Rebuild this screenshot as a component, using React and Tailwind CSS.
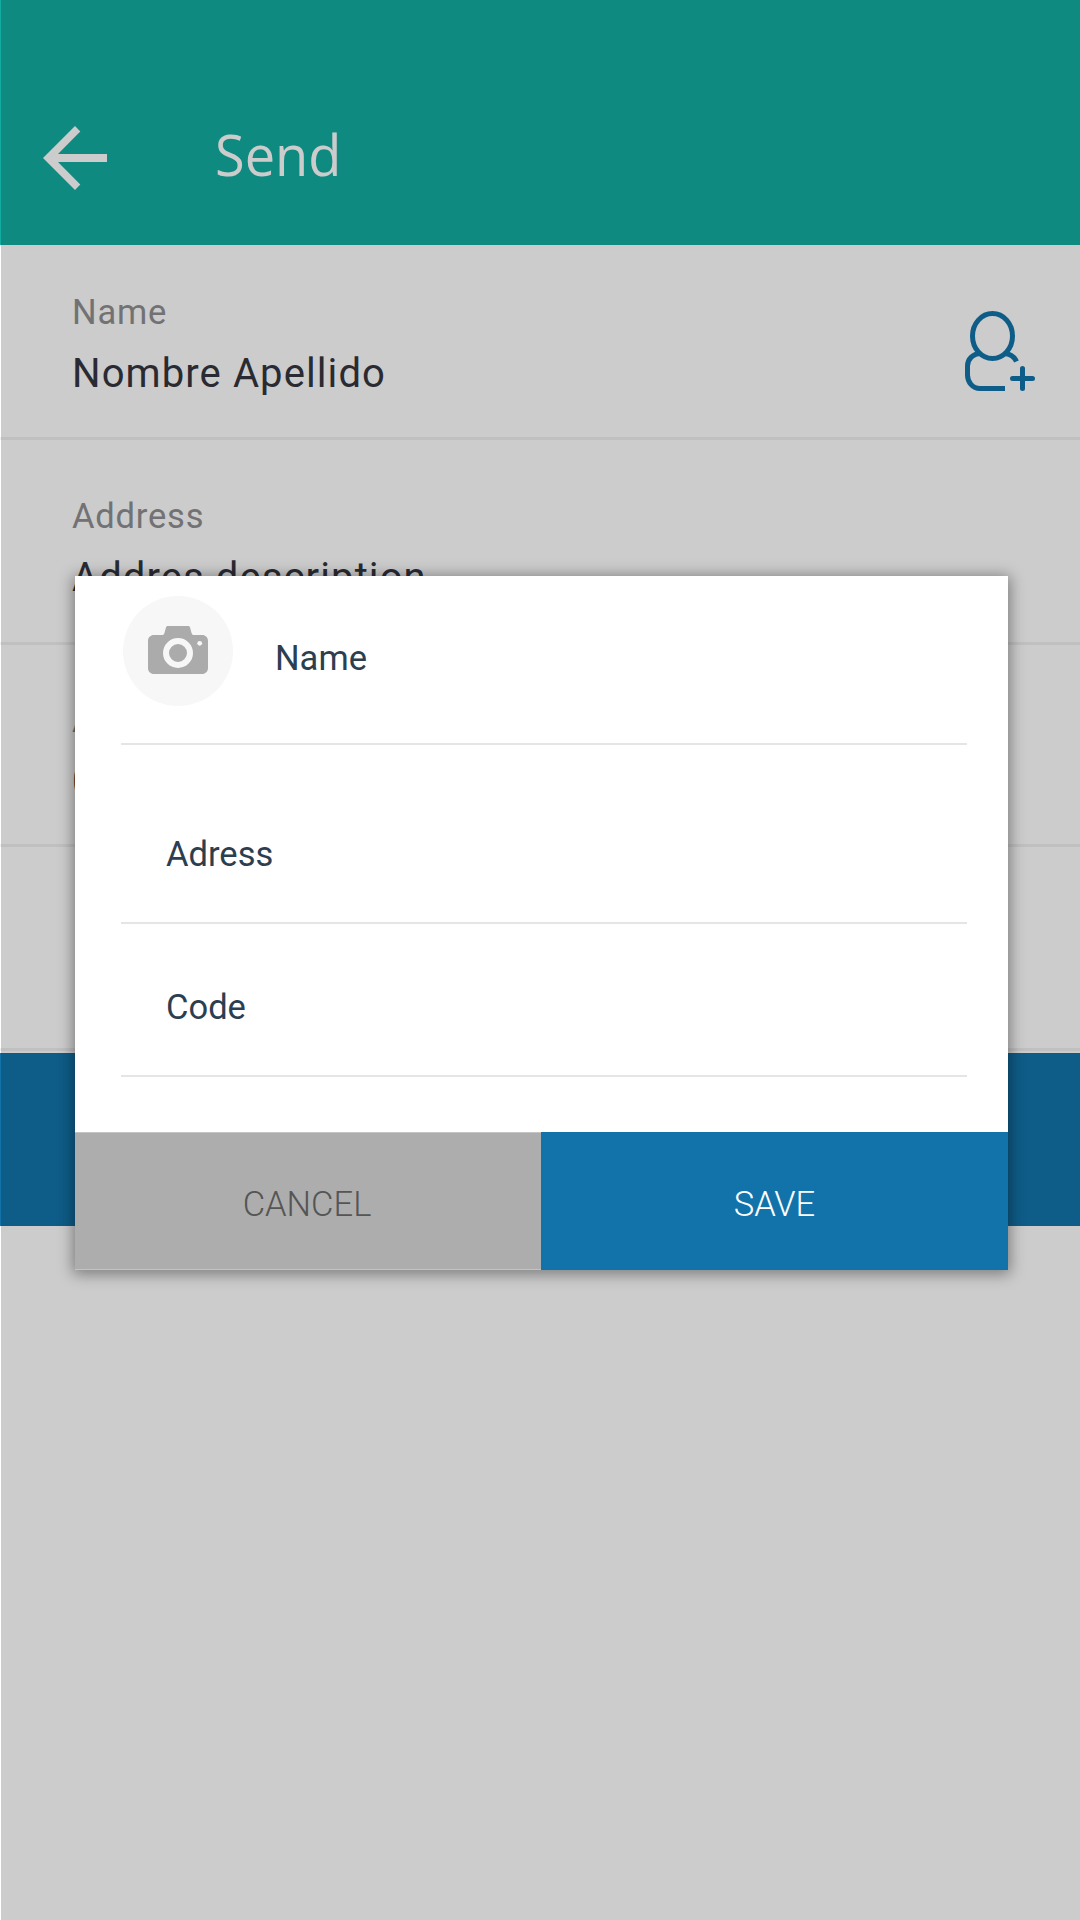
function BackArrow() {
  return (
    <svg className="ml-[43px] h-16 w-16" viewBox="0 0 64 64" fill="#fff">
      <path d="M64 28H15L37.300 5.500 32 0 0 32l32 32 5.300-5.500L15 36H64z" />
    </svg>
  );
}

function AddContact() {
  return (
    <svg className="h-20 w-[70px]" viewBox="0 0 70 80" fill="none" stroke="#1274ab" strokeWidth="5">
      <ellipse cx="27.500" cy="25" rx="20" ry="22.500" />
      <path d="M16 42.500C8 42.500 2.500 48 2.500 55v9c0 7 5 13.500 12.500 13.500h25" />
      <path d="M40 42.500c5 .5 9.500 3.500 11.500 8" />
      <path d="M57.500 57.500v20M47.500 67.500h20" strokeLinecap="round" />
    </svg>
  );
}

function Camera() {
  return (
    <svg className="mb-[2px] h-12 w-[60px]" viewBox="0 0 60 48">
      <path
        fill="#ababab"
        d="M6 9h8.500c1.500 0 2-2 2.500-4l.8-3c.4-1.400 1-2 2.200-2h20c1.200 0 1.800.6 2.200 2l.8 3c.5 2 1 4 2.500 4H54c3.500 0 6 2.500 6 6v27c0 3.500-2.500 6-6 6H6c-3.500 0-6-2.500-6-6V15c0-3.500 2.500-6 6-6z"
      />
      <circle cx="30" cy="27" r="12" fill="#ababab" stroke="#f7f7f7" strokeWidth="6" />
      <circle cx="51.700" cy="17.300" r="2.400" fill="#f7f7f7" />
    </svg>
  );
}

function Row({ label, value, height, children }) {
  return (
    <div className={`flex justify-between border-b-3 border-[#f1f1f1] pl-[72px] ${height}`}>
      <div>
        <div className="text-[34.500px] leading-[41px] tracking-[0.800px] text-[#8f8f92]">{label}</div>
        <div className="mt-[17px] text-[40px] leading-[47px] tracking-[1.100px] text-[#353540]">{value}</div>
      </div>
      {children}
    </div>
  );
}

function Field({ label, height, pad }) {
  return (
    <div className={`mr-[41px] ml-[46px] border-b-2 border-[#e4e5e6] pl-[45px] ${height} ${pad}`}>
      {label}
    </div>
  );
}

export default function App() {
  return (
    <div className="relative h-[1920px] w-[1080px] overflow-hidden bg-white font-['Roboto',sans-serif] antialiased">
      <header className="flex h-[245px] items-start bg-[#12ada0] pt-[126px]">
        <BackArrow />
        <h1 className="mt-[-10px] ml-[108px] origin-left scale-x-[0.950] font-['Open_Sans',sans-serif] text-[57px] leading-[76px] text-white">
          Send
        </h1>
      </header>
      <Row label="Name" value="Nombre Apellido" height="h-[195px] pt-[47px]">
        <div className="mt-[19px] mr-[45px]">
          <AddContact />
        </div>
      </Row>
      <Row label="Address" value="Addres description" height="h-[205px] pt-[56px]" />
      <Row label="Amount" value="0" height="h-[202px] pt-[55px]" />
      <div className="h-[204px] border-b-3 border-[#f1f1f1]" />
      <div className="mt-[2px] h-[173px] bg-[#1273ab]" />

      <div className="absolute inset-y-0 right-0 left-px bg-black/20" />

      <section className="absolute top-[576px] left-[75px] flex h-[694px] w-[933px] flex-col bg-white text-[34.500px] leading-[41px] tracking-normal text-[#2c3e50] shadow-[0_2px_14px_2px_rgba(0,0,0,0.4)]">
        <div className="mr-[41px] ml-[46px] flex h-[169px] border-b-2 border-[#e4e5e6]">
          <div className="mt-[20px] ml-[2px] flex h-[110px] w-[110px] items-center justify-center rounded-full bg-[#f7f7f8]">
            <Camera />
          </div>
          <div className="mt-[62px] ml-[42px]">Name</div>
        </div>
        <Field label="Adress" height="h-[179px]" pad="pt-[89px]" />
        <Field label="Code" height="h-[153px]" pad="pt-[63px]" />
        <div className="mt-auto grid h-[138px] grid-cols-[466px_467px] text-center font-light">
          <button className="border-y border-[#c4c4c4] bg-[#adadad] pt-[7px] pr-[2px] text-[#555]">CANCEL</button>
          <button className="bg-[#1273ab] pt-[7px] text-white">SAVE</button>
        </div>
      </section>
    </div>
  );
}
